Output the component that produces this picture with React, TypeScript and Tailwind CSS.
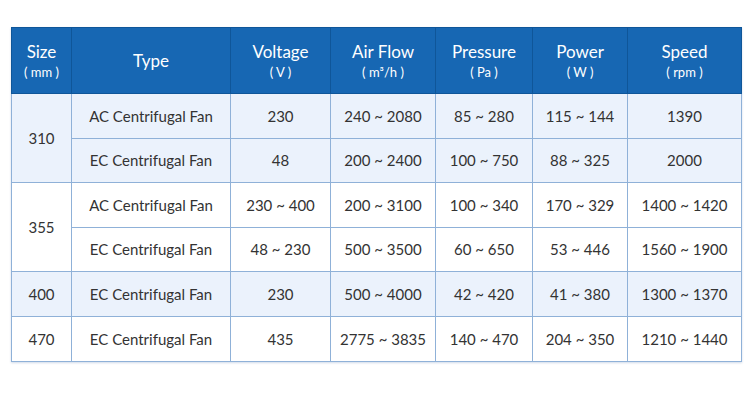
const heads = [
  { t: "Size", u: "( mm )", w: "w-[60px]" },
  { t: "Type", u: "", w: "w-[159px]" },
  { t: "Voltage", u: "( V )", w: "w-[100px]" },
  { t: "Air Flow", u: "( m³/h )", w: "w-[105px]" },
  { t: "Pressure", u: "( Pa )", w: "w-[97px]" },
  { t: "Power", u: "( W )", w: "w-[95px]" },
  { t: "Speed", u: "( rpm )", w: "w-[114px]" },
];

type Row = { type: string; vals: string[] };
type Group = { size: string; shade: boolean; rows: Row[] };

const groups: Group[] = [
  {
    size: "310",
    shade: true,
    rows: [
      { type: "AC Centrifugal Fan", vals: ["230", "240 ~ 2080", "85 ~ 280", "115 ~ 144", "1390"] },
      { type: "EC Centrifugal Fan", vals: ["48", "200 ~ 2400", "100 ~ 750", "88 ~ 325", "2000"] },
    ],
  },
  {
    size: "355",
    shade: false,
    rows: [
      { type: "AC Centrifugal Fan", vals: ["230 ~ 400", "200 ~ 3100", "100 ~ 340", "170 ~ 329", "1400 ~ 1420"] },
      { type: "EC Centrifugal Fan", vals: ["48 ~ 230", "500 ~ 3500", "60 ~ 650", "53 ~ 446", "1560 ~ 1900"] },
    ],
  },
  {
    size: "400",
    shade: true,
    rows: [{ type: "EC Centrifugal Fan", vals: ["230", "500 ~ 4000", "42 ~ 420", "41 ~ 380", "1300 ~ 1370"] }],
  },
  {
    size: "470",
    shade: false,
    rows: [{ type: "EC Centrifugal Fan", vals: ["435", "2775 ~ 3835", "140 ~ 470", "204 ~ 350", "1210 ~ 1440"] }],
  },
];

const cell = "border border-[#8fb1d8] text-center align-middle";

export default function App() {
  return (
    <div className="w-[750px] h-[400px] bg-white pt-[27px] pl-[11px] font-['Lato','Open_Sans',sans-serif]">
      <table className="border-collapse table-fixed w-[730px] text-[15px] text-[#333] shadow-[0_1px_2px_rgba(120,150,190,0.35)]">
        <thead>
          <tr className="h-[66px] bg-[#1767b3] text-white">
            {heads.map((h) => (
              <th key={h.t} className={`${h.w} border border-[#0f5699] font-normal text-center align-middle`}>
                <div className="text-[17px] leading-[21px]">{h.t}</div>
                {h.u && <div className="text-[13px] leading-[16px] mt-[2px]">{h.u}</div>}
              </th>
            ))}
          </tr>
        </thead>
        <tbody>
          {groups.map((g) =>
            g.rows.map((r, i) => (
              <tr key={g.size + r.type} className={`${i === 0 ? "h-[45px]" : "h-[44px]"} ${g.shade ? "bg-[#ebf2fc]" : "bg-white"}`}>
                {i === 0 && (
                  <td rowSpan={g.rows.length} className={cell}>
                    {g.size}
                  </td>
                )}
                <td className={cell}>{r.type}</td>
                {r.vals.map((v, j) => (
                  <td key={j} className={cell}>
                    {v}
                  </td>
                ))}
              </tr>
            ))
          )}
        </tbody>
      </table>
    </div>
  );
}
